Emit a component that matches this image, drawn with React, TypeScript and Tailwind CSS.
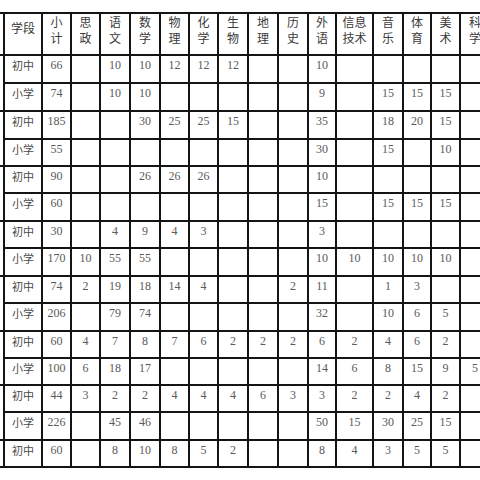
const subjects = [
  ['小', '计'],
  ['思', '政'],
  ['语', '文'],
  ['数', '学'],
  ['物', '理'],
  ['化', '学'],
  ['生', '物'],
  ['地', '理'],
  ['历', '史'],
  ['外', '语'],
  ['信息', '技术'],
  ['音', '乐'],
  ['体', '育'],
  ['美', '术'],
  ['科', '学'],
];

// 学段 + 小计 ... 科学
const rows: [string, string[]][] = [
  ['初中', ['66', '', '10', '10', '12', '12', '12', '', '', '10', '', '', '', '', '']],
  ['小学', ['74', '', '10', '10', '', '', '', '', '', '9', '', '15', '15', '15', '']],
  ['初中', ['185', '', '', '30', '25', '25', '15', '', '', '35', '', '18', '20', '15', '']],
  ['小学', ['55', '', '', '', '', '', '', '', '', '30', '', '15', '', '10', '']],
  ['初中', ['90', '', '', '26', '26', '26', '', '', '', '10', '', '', '', '', '']],
  ['小学', ['60', '', '', '', '', '', '', '', '', '15', '', '15', '15', '15', '']],
  ['初中', ['30', '', '4', '9', '4', '3', '', '', '', '3', '', '', '', '', '']],
  ['小学', ['170', '10', '55', '55', '', '', '', '', '', '10', '10', '10', '10', '10', '']],
  ['初中', ['74', '2', '19', '18', '14', '4', '', '', '2', '11', '', '1', '3', '', '']],
  ['小学', ['206', '', '79', '74', '', '', '', '', '', '32', '', '10', '6', '5', '']],
  ['初中', ['60', '4', '7', '8', '7', '6', '2', '2', '2', '6', '2', '4', '6', '2', '']],
  ['小学', ['100', '6', '18', '17', '', '', '', '', '', '14', '6', '8', '15', '9', '5']],
  ['初中', ['44', '3', '2', '2', '4', '4', '4', '6', '3', '3', '2', '2', '4', '2', '']],
  ['小学', ['226', '', '45', '46', '', '', '', '', '', '50', '15', '30', '25', '15', '']],
  ['初中', ['60', '', '8', '10', '8', '5', '2', '', '', '8', '4', '3', '5', '5', '']],
];

const cell = 'border-r-2 border-b-2 border-[#141414]';

export default function App() {
  return (
    <div className="w-[480px] h-[480px] overflow-hidden bg-white pt-[12px]">
      <div className="grid w-[491px] grid-cols-[5px_38px_29px_29px_30px_30px_29px_29px_30px_30px_30px_28px_37px_30px_28px_29px_30px] grid-rows-[44px_28px_28px_28px_27px_27px_28px_27px_28px_27px_28px_27px_27px_27px_28px_27px]">
        {/* header */}
        <div className={`${cell} border-t-2`} />
        <div className={`${cell} border-t-2 pt-[6px] text-center text-[12px] leading-[16px] text-[#3a3a3a] font-['Noto_Sans_CJK_SC',sans-serif]`}>
          学段
        </div>
        {subjects.map((s, i) => (
          <div
            key={i}
            className={`${cell} border-t-2 flex flex-col items-center text-[12px] leading-[16px] text-[#3a3a3a] font-['Noto_Sans_CJK_SC',sans-serif]`}
          >
            <span>{s[0]}</span>
            <span>{s[1]}</span>
          </div>
        ))}

        {/* body */}
        {rows.map(([stage, vals], r) => (
          <>
            {r % 2 === 0 && (
              <div key={`s${r}`} className={`${cell} ${r < 14 ? 'row-span-2' : ''}`} />
            )}
            <div key={`l${r}`} className={`${cell} pt-[2px] text-center text-[11px] leading-[14px] text-[#4a4a4a] font-['Noto_Sans_CJK_SC',sans-serif]`}>
              {stage}
            </div>
            {vals.map((v, c) => (
              <div key={`${r}-${c}`} className={`${cell} pt-[2px] text-center text-[12px] leading-[14px] text-[#5a5a5a] font-['Liberation_Serif',serif]`}>
                {v}
              </div>
            ))}
          </>
        ))}
      </div>
    </div>
  );
}
